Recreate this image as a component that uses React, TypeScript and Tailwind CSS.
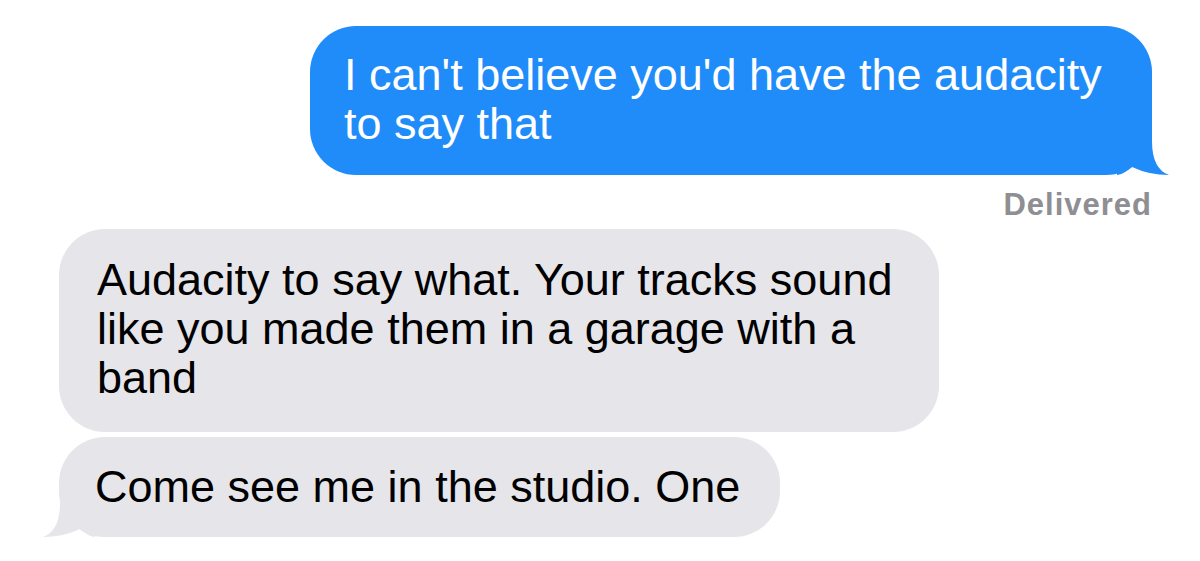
const FONT = "font-['Liberation_Sans',Arial,sans-serif]";

function SentTail() {
  return (
    <svg className="absolute bottom-0 right-[-17px]" width="52" height="52" viewBox="0 0 52 52">
      <path d="M0 0 L35 0 L35 18 Q35 46 52 52 Q32 52 15 44 Q7 51 0 52 Z" fill="#1f8cf9" />
    </svg>
  );
}

function ReceivedTail() {
  return (
    <svg className="absolute bottom-0 left-[-16px]" width="52" height="52" viewBox="0 0 52 52">
      <path d="M52 0 L17 0 L17 18 Q17 46 0 52 Q20 52 37 44 Q45 51 52 52 Z" fill="#e5e5ea" />
    </svg>
  );
}

export default function App() {
  return (
    <div className={`${FONT} flex h-[561px] w-[1200px] flex-col overflow-hidden bg-white`}>
      {/* outgoing */}
      <div className="flex justify-end pr-[48px] pt-[26px]">
        <div className="relative h-[149px] w-[842px] rounded-[46px] bg-[#1f8cf9] pl-[34px] pt-[24px] text-[45px] leading-[49px] whitespace-nowrap text-white">
          I can't believe you'd have the audacity
          <br />
          to say that
          <SentTail />
        </div>
      </div>
      <div className="mt-[12px] flex justify-end pr-[48px]">
        <span className="text-[31px] font-bold leading-[35px] tracking-[1px] text-[#8e8e93]">Delivered</span>
      </div>

      {/* incoming */}
      <div className="mt-[7px] flex flex-col items-start gap-[5px] pl-[59px]">
        <div className="h-[203px] w-[880px] rounded-[46px] bg-[#e5e5ea] pl-[38px] pt-[26px] text-[45px] leading-[49px] whitespace-nowrap text-black">
          Audacity to say what. Your tracks sound
          <br />
          like you made them in a garage with a
          <br />
          band
        </div>
        <div className="relative h-[100px] w-[721px] rounded-[46px] bg-[#e5e5ea] pl-[36px] pt-[25px] text-[45px] leading-[49px] whitespace-nowrap text-black">
          Come see me in the studio. One
          <ReceivedTail />
        </div>
      </div>
    </div>
  );
}
